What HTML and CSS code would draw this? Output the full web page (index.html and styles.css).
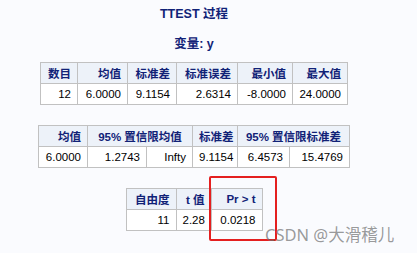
FILE: index.html
```html
<!DOCTYPE html>
<html>
<head>
<meta charset="utf-8">
<link rel="stylesheet" href="styles.css">
</head>
<body>
<div class="page">
  <div class="title">TTEST 过程</div>
  <div class="subtitle">变量: y</div>
  <table class="tbl t1">
    <colgroup><col style="width:37px"><col style="width:50px"><col style="width:49px"><col style="width:61px"><col style="width:55px"><col style="width:55px"></colgroup>
    <tr><th>数目</th><th>均值</th><th>标准差</th><th>标准误差</th><th>最小值</th><th>最大值</th></tr>
    <tr><td>12</td><td>6.0000</td><td>9.1154</td><td>2.6314</td><td>-8.0000</td><td>24.0000</td></tr>
  </table>
  <table class="tbl t2">
    <colgroup><col style="width:49px"><col style="width:59px"><col style="width:46px"><col style="width:45px"><col style="width:52px"><col style="width:60px"></colgroup>
    <tr><th>均值</th><th colspan="2">95% 置信限均值</th><th>标准差</th><th colspan="2">95% 置信限标准差</th></tr>
    <tr><td>6.0000</td><td>1.2743</td><td>Infty</td><td>9.1154</td><td>6.4573</td><td>15.4769</td></tr>
  </table>
  <table class="tbl t3">
    <colgroup><col style="width:50px"><col style="width:35px"><col style="width:51px"></colgroup>
    <tr><th>自由度</th><th>t 值</th><th>Pr &gt; t</th></tr>
    <tr><td>11</td><td>2.28</td><td>0.0218</td></tr>
  </table>
  <div class="highlight"></div>
  <div class="watermark">CSDN @大滑稽儿</div>
</div>
</body>
</html>
```
FILE: styles.css
```css
html, body {
  margin: 0;
  padding: 0;
  background: #fafbfe;
}
.page {
  position: relative;
  width: 388px;
  height: 253px;
  padding-top: 6px;
  box-sizing: border-box;
  font-family: "Liberation Sans", Arial, "Noto Sans CJK SC", sans-serif;
}
.title {
  text-align: center;
  font-weight: bold;
  font-size: 12.5px;
  line-height: 16px;
  color: #112277;
}
.subtitle {
  text-align: center;
  font-weight: bold;
  font-size: 12.5px;
  line-height: 16px;
  color: #112277;
  margin-top: 14px;
}
.tbl {
  border-collapse: collapse;
  table-layout: fixed;
  margin: 0 auto;
  font-size: 11.5px;
  border: 1px solid #c1c1c1;
  background: #ffffff;
}
.tbl th, .tbl td {
  border: 1px solid #c1c1c1;
  height: 21px;
  padding: 0 6px;
  text-align: right;
  white-space: nowrap;
  overflow: hidden;
  box-sizing: border-box;
}
.tbl th {
  background: #edf2f9;
  color: #112277;
  font-weight: bold;
}
.tbl td {
  color: #000000;
}
.t1 {
  margin-top: 10px;
  width: 308px;
}
.t2 {
  margin-top: 20px;
  width: 312px;
}
.t3 {
  margin-top: 20px;
  width: 137px;
}
.t2 th:nth-child(2), .t2 th:nth-child(4) {
  text-align: center;
}
.highlight {
  position: absolute;
  left: 209px;
  top: 176px;
  width: 68px;
  height: 65px;
  box-sizing: border-box;
  border: 2.5px solid #e41f1f;
  border-radius: 2px;
}
.watermark {
  position: absolute;
  left: 265px;
  top: 225px;
  font-family: "Noto Sans", "Noto Sans CJK SC", sans-serif;
  font-size: 16.5px;
  line-height: 20px;
  color: rgba(110, 110, 110, 0.7);
  white-space: nowrap;
}
```
